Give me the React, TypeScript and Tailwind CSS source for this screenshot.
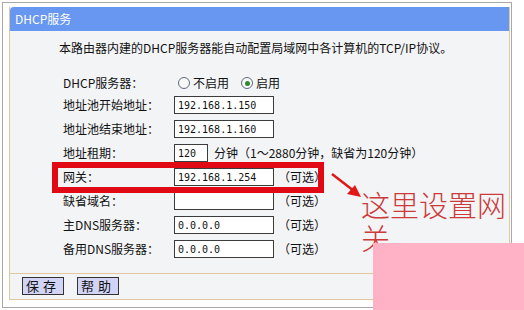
import React from 'react';

const cjk = { fontFamily: '"Noto Sans CJK SC", "Noto Sans", sans-serif' };
const mono = { fontFamily: '"DejaVu Sans Mono", "Liberation Mono", monospace' };

const Radio: React.FC<{ checked?: boolean }> = ({ checked }) => (
  <span className="flex h-[12px] w-[12px] items-center justify-center rounded-full border border-[#5d6b80] bg-[#f8f8f8]">
    {checked && <span className="h-[5px] w-[5px] rounded-full bg-[#2f8a2f]" />}
  </span>
);

const TextBox: React.FC<{ value?: string; width?: string }> = ({ value = '', width = 'w-[100px]' }) => (
  <div className={`${width} flex h-[18px] items-center border border-[#3c3c3c] bg-white px-[3px] text-[10px] text-[#111]`} style={mono}>
    {value}
  </div>
);

const Row: React.FC<{ label: string; first?: boolean; children: React.ReactNode }> = ({ label, first, children }) => (
  <div className={`flex items-center ${first ? 'h-[20px]' : 'h-[24px]'}`}>
    <div className="w-[111px] shrink-0 text-[12px] text-[#111]">{label}</div>
    <div className="flex items-center">{children}</div>
  </div>
);

const Optional = () => <span className="ml-[4px] text-[12px] text-[#111]">（可选）</span>;

export default function App() {
  return (
    <div className="relative h-[310px] w-[524px] overflow-hidden bg-white" style={cjk}>
      <div className="pl-[2px] pt-[2px]">
        <div className="h-[306px] w-[510px] border border-[#a8a8a8]">
          <div className="ml-[6px] mt-[4px] flex h-[293px] w-[501px] flex-col border-x border-b border-[#e3c79c] bg-[#f3f4f6]">
            <div className="flex h-[24px] items-center rounded-tl-[4px] bg-[#6797f0] pl-[5px] text-[12px] text-white">
              DHCP服务
            </div>
            <div className="mt-[9px] flex text-[12px] leading-[16px] text-[#111]">
              <div className="w-[49px] shrink-0" />
              <div>本路由器内建的DHCP服务器能自动配置局域网中各计算机的TCP/IP协议。</div>
            </div>
            <div className="mt-[17px] pl-[53px]">
              <Row label="DHCP服务器：" first>
                <span className="ml-[4px] flex items-center gap-[3px] text-[12px] text-[#111]">
                  <Radio />不启用
                </span>
                <span className="ml-[12px] flex items-center gap-[3px] text-[12px] text-[#111]">
                  <Radio checked />启用
                </span>
              </Row>
              <Row label="地址池开始地址：">
                <TextBox value="192.168.1.150" />
              </Row>
              <Row label="地址池结束地址：">
                <TextBox value="192.168.1.160" />
              </Row>
              <Row label="地址租期：">
                <TextBox value="120" width="w-[34px]" />
                <span className="ml-[6px] text-[12px] text-[#111]">分钟（1～2880分钟，缺省为120分钟）</span>
              </Row>
              <Row label="网关：">
                <TextBox value="192.168.1.254" />
                <Optional />
              </Row>
              <Row label="缺省域名：">
                <TextBox />
                <Optional />
              </Row>
              <Row label="主DNS服务器：">
                <TextBox value="0.0.0.0" />
                <Optional />
              </Row>
              <Row label="备用DNS服务器：">
                <TextBox value="0.0.0.0" />
                <Optional />
              </Row>
            </div>
            <div className="mt-[12px] border-t border-[#e3c79c] pl-[12px] pt-[3px]">
              <div className="flex gap-[13px]">
                <button className="h-[18px] w-[42px] border border-[#333] bg-[#d2d4f6] text-[13px] leading-[16px] tracking-[4px] text-[#111]">
                  保存
                </button>
                <button className="h-[18px] w-[42px] border border-[#333] bg-[#d2d4f6] text-[13px] leading-[16px] tracking-[4px] text-[#111]">
                  帮助
                </button>
              </div>
            </div>
          </div>
        </div>
      </div>

      {/* red highlight box round the gateway row */}
      <div className="absolute left-[52px] top-[162px] h-[31px] w-[272px] border-[6px] border-[#e10a14]" />

      {/* arrow */}
      <svg className="absolute left-[328px] top-[170px]" width="36" height="30" viewBox="0 0 36 30">
        <line x1="4" y1="4" x2="26" y2="21" stroke="#e01818" strokeWidth="2.5" />
        <polygon points="33,27 19,24 27,15" fill="#e01818" />
      </svg>

      {/* annotation */}
      <div className="absolute left-[361px] top-[188px] w-[150px] text-[29px] font-light leading-[33px] text-[#cc3a3a]">
        这里设置网关
      </div>

      {/* pink overlay in corner */}
      <div className="absolute left-[373px] top-[243px] h-[67px] w-[151px] bg-[#ffb1c6]" />
    </div>
  );
}
